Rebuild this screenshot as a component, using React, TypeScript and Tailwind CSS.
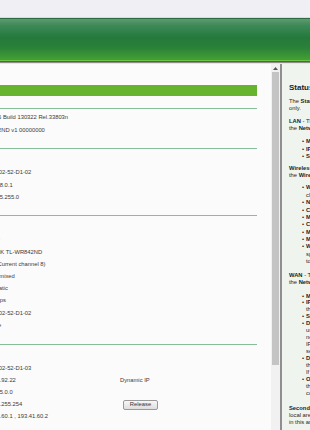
import React from "react"

type Row = {label: string; value: string; extra?: React.ReactNode}

const firmwareRows: Row[] = [
    {label: "Firmware Version:", value: "3.13.35 Build 130322 Rel.33803n"},
    {label: "Hardware Version:", value: "WR842ND v1 00000000"},
]

const lanRows: Row[] = [
    {label: "MAC Address:", value: "64-70-02-52-D1-02"},
    {label: "IP Address:", value: "192.168.0.1"},
    {label: "Subnet Mask:", value: "255.255.255.0"},
]

const wirelessRows: Row[] = [
    {label: "Wireless Radio:", value: "Enable"},
    {label: "Name (SSID):", value: "TP-LINK TL-WR842ND"},
    {label: "Channel:", value: "Auto (Current channel 8)"},
    {label: "Mode:", value: "11bgn mixed"},
    {label: "Channel Width:", value: "Automatic"},
    {label: "Max Tx Rate:", value: "300Mbps"},
    {label: "MAC Address:", value: "64-70-02-52-D1-02"},
    {label: "WDS Status:", value: "Disable"},
]

const wanRows: Row[] = [
    {label: "MAC Address:", value: "64-70-02-52-D1-03"},
    {label: "IP Address:", value: "193.41.92.22", extra: <span>Dynamic IP</span>},
    {label: "Subnet Mask:", value: "255.255.0.0"},
    {
        label: "Default Gateway:",
        value: "193.41.255.254",
        extra: (
            <button
                className="ml-[3px] flex h-[10px] w-[35px] items-center justify-center rounded-[2px] border border-[#9a9a9a] bg-[linear-gradient(to_bottom,#f7f7f7,#dedede)] text-[5.8px] leading-none text-[#333]">
                Release
            </button>
        ),
    },
    {label: "DNS Server:", value: "193.41.60.1 , 193.41.60.2"},
]

const Divider = ({className = ""}: {className?: string}) => (
    <div className={"h-px w-[375px] bg-[#86bd9a] " + className}/>
)

const Rows = ({rows, rowClass}: {rows: Row[]; rowClass: string}) => (
    <>
        {rows.map((r, i) => (
            <div key={i} className={"flex items-center whitespace-nowrap " + rowClass}>
                <span className="w-[100px] shrink-0">{r.label}</span>
                <span className="w-[138px] shrink-0">{r.value}</span>
                {r.extra}
            </div>
        ))}
    </>
)

const Bullet = ({children}: {children: React.ReactNode}) => (
    <div className="flex pl-[13px]">
        <span className="w-[4px] shrink-0">•</span>
        <div>{children}</div>
    </div>
)

const Line = ({children}: {children: React.ReactNode}) => (
    <div className="whitespace-nowrap">{children}</div>
)

const HelpPanel = () => (
    <div className="flex-1 overflow-hidden bg-[#eff5ee] pl-[7px] pt-[19px] text-[5.8px] text-[#1e1e1e]">
        <div className="h-[10px] whitespace-nowrap text-[8px] font-bold leading-[10px]">Status</div>

        <div className="mt-[4.5px] leading-[7px]">
            <Line>The <b>Status</b> page displays the Router's current status and configuration. All information is read-</Line>
            <Line>only.</Line>
        </div>

        <div className="mt-[6.5px] leading-[7px]">
            <Line><b>LAN</b> - The following parameters apply to the LAN port of the Router. You can configure them in</Line>
            <Line>the <b>Network -&gt; LAN</b> page.</Line>
        </div>

        <div className="mt-[6.2px] leading-[7.4px]">
            <Bullet><Line><b>MAC Address</b> - The physical address of the Router, as seen from the LAN.</Line></Bullet>
            <Bullet><Line><b>IP Address</b> - The LAN IP address of the Router.</Line></Bullet>
            <Bullet><Line><b>Subnet Mask</b> - The subnet mask associated with LAN IP address.</Line></Bullet>
        </div>

        <div className="mt-[4.4px] leading-[7px]">
            <Line><b>Wireless</b> - These are the current settings or information for Wireless. You can configure them in</Line>
            <Line>the <b>Wireless -&gt; Wireless Settings</b> page.</Line>
        </div>

        <div className="mt-[5.7px] leading-[7.37px]">
            <Bullet>
                <Line><b>Wireless Radio</b> - Indicates whether the wireless radio feature of the Router is enabled or disabled.</Line>
                <Line>clients will not be able to access the Router when it is disabled.</Line>
            </Bullet>
            <Bullet><Line><b>Name (SSID)</b> - The SSID of the Router.</Line></Bullet>
            <Bullet><Line><b>Channel</b> - The current wireless channel in use.</Line></Bullet>
            <Bullet><Line><b>Mode</b> - The current wireless mode which the Router works on.</Line></Bullet>
            <Bullet><Line><b>Channel Width</b> - The bandwidth of the wireless channel.</Line></Bullet>
            <Bullet><Line><b>MAC Address</b> - The physical address of the Router, as seen from the WLAN.</Line></Bullet>
            <Bullet><Line><b>Max Tx Rate</b> - The maximum tx rate.</Line></Bullet>
            <Bullet>
                <Line><b>WDS Status</b> - The status of WDS connection, Init: WDS connection is down; Scan: Try to find the</Line>
                <Line>specified AP; Auth: Try to authenticate; ASSOC: Try to associate; Run: Associated</Line>
                <Line>to the AP successfully.</Line>
            </Bullet>
        </div>

        <div className="mt-[5.9px] leading-[7px]">
            <Line><b>WAN</b> - The following parameters apply to the WAN ports of the Router. You can configure them in</Line>
            <Line>the <b>Network -&gt; WAN</b> page.</Line>
        </div>

        <div className="mt-[7px] leading-[6.93px]">
            <Bullet><Line><b>MAC Address</b> - The physical address of the WAN port, as seen from the Internet.</Line></Bullet>
            <Bullet>
                <Line><b>IP Address</b> - The current WAN (Internet) IP Address. This field will be blank or 0.0.0.0 if</Line>
                <Line>there is no connection to the Internet.</Line>
            </Bullet>
            <Bullet><Line><b>Subnet Mask</b> - The subnet mask associated with the WAN IP Address.</Line></Bullet>
            <Bullet>
                <Line><b>Default Gateway</b> - The Gateway currently used by the Router is shown here. When you</Line>
                <Line>use Dynamic IP as the Internet connection type, click Renew to obtain</Line>
                <Line>new IP parameters dynamically from the ISP, or click Release to release</Line>
                <Line>IP parameters. You can also set the Gateway manually in the WAN</Line>
                <Line>settings page.</Line>
            </Bullet>
            <Bullet>
                <Line><b>DNS Server</b> - The DNS (Domain Name System) Server IP addresses currently used by</Line>
                <Line>the Router. Multiple DNS IP settings are separated by comma.</Line>
                <Line>If no DNS Server is used, this field will be blank.</Line>
            </Bullet>
            <Bullet>
                <Line><b>Online Time</b> - The time that you are online. When you use PPPoE as WAN connection type,</Line>
                <Line>the online time is shown here. Click the Connect or Disconnect button to</Line>
                <Line>connect to or disconnect from the Internet.</Line>
            </Bullet>
        </div>

        <div className="mt-[8px] leading-[7px]">
            <Line><b>Secondary Connection</b> - Besides PPPoE, if you use an extra connection type to connect to a</Line>
            <Line>local area network provided by ISP, then the information of this secondary connection is shown</Line>
            <Line>in this area.</Line>
        </div>
    </div>
)

export default function App() {
    return (
        <div className="flex h-[430px] w-[310px] flex-col overflow-hidden bg-white font-['Liberation_Sans',Arial,sans-serif]">
            {/* banner */}
            <div className="h-[17px] shrink-0 bg-[#f0eff4]"/>
            <div className="h-px shrink-0 bg-[#d9ddd9]"/>
            <div className="h-px shrink-0 bg-[#2e6b40]"/>
            <div className="h-[41px] shrink-0 bg-[linear-gradient(to_bottom,#5f9a72_0%,#3f8a58_15%,#24793b_45%,#2a8138_70%,#44a034_100%)]"/>
            <div className="h-px shrink-0 bg-[#6cc443]"/>
            <div className="h-px shrink-0 bg-[#2f7a36]"/>
            <div className="h-px shrink-0 bg-[#8c8c8c]"/>
            <div className="h-px shrink-0 bg-[#e6e6e6]"/>

            <div className="flex min-h-0 flex-1">
                {/* main frame, scrolled to the right */}
                <div className="w-[271px] shrink-0 overflow-hidden bg-[#fbfbfb] text-[5.8px] text-[#3a3a3a]">
                    <div className="-ml-[118px] w-[375px] pt-[21px]">
                        <div className="flex h-[11px] items-center bg-[#66b32e] pl-[8px] text-[7px] font-bold text-white">Status</div>

                        <Divider className="mt-[12px]"/>
                        <div className="pt-[2.5px]">
                            <Rows rows={firmwareRows} rowClass="h-[12.3px]"/>
                        </div>

                        <Divider className="mt-[11.9px]"/>
                        <div className="pt-[5.4px]">
                            <div className="h-[12.2px] font-bold leading-[12.2px]">LAN</div>
                            <Rows rows={lanRows} rowClass="h-[12.2px]"/>
                        </div>

                        <Divider className="mt-[11.8px]"/>
                        <div className="pt-[5.6px]">
                            <div className="h-[12.2px] font-bold leading-[12.2px]">Wireless</div>
                            <Rows rows={wirelessRows} rowClass="h-[12.2px]"/>
                        </div>

                        <Divider className="mt-[12.6px]"/>
                        <div className="pt-[5px]">
                            <div className="h-[12.2px] font-bold leading-[12.2px]">WAN</div>
                            <Rows rows={wanRows} rowClass="h-[12.2px]"/>
                        </div>
                    </div>
                </div>

                {/* scrollbar */}
                <div className="flex w-[9px] shrink-0 flex-col bg-[#f1f1f1]">
                    <div className="flex h-[8px] items-center justify-center">
                        <svg width="5" height="3" viewBox="0 0 5 3">
                            <path d="M0 3 L2.5 0 L5 3 Z" fill="#555"/>
                        </svg>
                    </div>
                    <div className="mx-px h-[293px] bg-[#c4c4c4]"/>
                </div>

                <div className="w-[2px] shrink-0 bg-[#8f8f8f]"/>

                <HelpPanel/>
            </div>
        </div>
    )
}
